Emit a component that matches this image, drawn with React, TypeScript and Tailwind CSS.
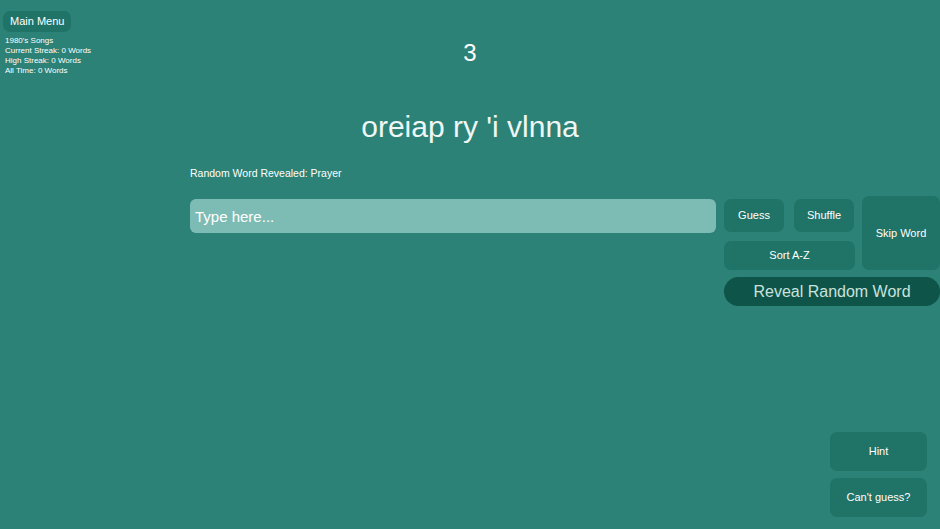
import { useState } from 'react';

export default function App() {
  const [guess, setGuess] = useState('');

  return (
    <div
      className="h-[529px] w-[940px] overflow-hidden bg-[#2c8276] text-white flex flex-col"
      style={{ fontFamily: '"Liberation Sans", Arial, sans-serif' }}
    >
      {/* Top bar */}
      <div className="grid grid-cols-[190px_1fr_190px]">
        <div className="pt-[11px] pl-[3px]">
          <button className="block h-[21px] px-[7px] rounded-[7px] bg-[#1f7367] text-[11px] leading-none text-white">
            Main Menu
          </button>
          <div className="mt-[4px] pl-[2px] text-[8px] leading-[10px]">
            <div>1980's Songs</div>
            <div>Current Streak: 0 Words</div>
            <div>High Streak: 0 Words</div>
            <div>All Time: 0 Words</div>
          </div>
        </div>
        <div className="flex justify-center pt-[39px]">
          <span className="text-[24px] leading-[28px]">3</span>
        </div>
        <div />
      </div>

      {/* Scrambled word */}
      <div className="mt-[34px] text-center text-[30px] leading-[34px] text-[#eef7f5]">
        oreiap ry 'i vlnna
      </div>

      <div className="mt-[23px] pl-[190px] text-[10.5px] leading-[13px]">
        Random Word Revealed: Prayer
      </div>

      {/* Input and actions */}
      <div className="mt-[16px] flex pl-[190px]">
        <input
          value={guess}
          onChange={(e) => setGuess(e.target.value)}
          placeholder="Type here..."
          className="mt-[3px] h-[34px] w-[526px] rounded-[6px] bg-[#7dbcb4] px-[5px] text-[15px] text-white placeholder:text-white outline-none"
        />
        <div className="ml-[8px] w-[216px] flex flex-col">
          <div className="flex">
            <div className="flex flex-col">
              <div className="flex pt-[3px]">
                <button className="h-[33px] w-[60px] rounded-[7px] bg-[#1f7367] text-[11px]">
                  Guess
                </button>
                <button className="ml-[10px] h-[33px] w-[60px] rounded-[7px] bg-[#1f7367] text-[11px]">
                  Shuffle
                </button>
              </div>
              <button className="mt-[9px] h-[29px] w-[131px] rounded-[7px] bg-[#1f7367] text-[11px]">
                Sort A-Z
              </button>
            </div>
            <button className="ml-[7px] h-[74px] w-[78px] rounded-[7px] bg-[#1f7367] text-[11px]">
              Skip Word
            </button>
          </div>
          <button className="mt-[7px] h-[29px] w-[216px] rounded-full bg-[#0f5448] text-[16px] text-[#c9e2dd]">
            Reveal Random Word
          </button>
        </div>
      </div>

      {/* Bottom helpers */}
      <div className="mt-auto mb-[12px] mr-[13px] flex flex-col items-end gap-[7px]">
        <button className="h-[39px] w-[97px] rounded-[7px] bg-[#1f7367] text-[11px]">
          Hint
        </button>
        <button className="h-[39px] w-[97px] rounded-[7px] bg-[#1f7367] text-[11px]">
          Can't guess?
        </button>
      </div>
    </div>
  );
}
